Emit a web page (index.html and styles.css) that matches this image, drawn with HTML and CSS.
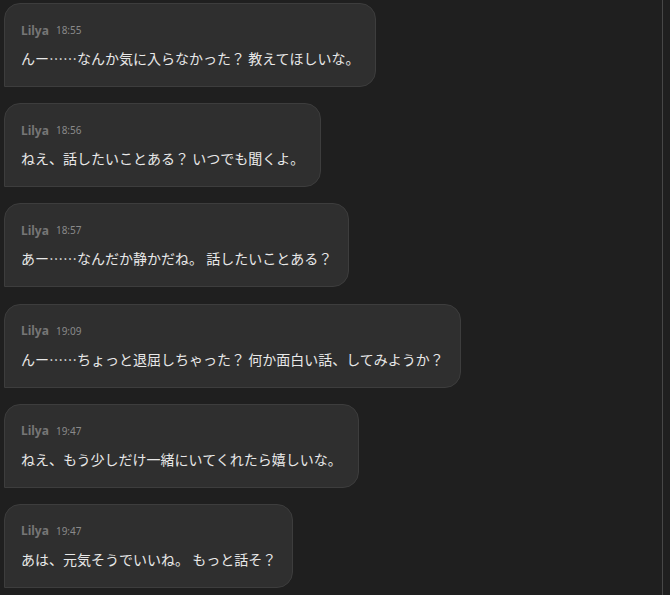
FILE: index.html
```html
<!DOCTYPE html>
<html lang="ja">
  <head>
    <meta charset="UTF-8" />
    <meta name="viewport" content="width=device-width, initial-scale=1.0" />
    <title>Lilya</title>
    <link rel="stylesheet" href="styles.css">
  </head>
  <body>
    <div class="chat">
      <div class="messages">
        <div class="bubble">
          <div class="meta"><span class="name">Lilya</span><span class="time">18:55</span></div>
          <p class="text">んー……なんか気に入らなかった？ 教えてほしいな。</p>
        </div>
        <div class="bubble">
          <div class="meta"><span class="name">Lilya</span><span class="time">18:56</span></div>
          <p class="text">ねえ、話したいことある？ いつでも聞くよ。</p>
        </div>
        <div class="bubble">
          <div class="meta"><span class="name">Lilya</span><span class="time">18:57</span></div>
          <p class="text">あー……なんだか静かだね。 話したいことある？</p>
        </div>
        <div class="bubble">
          <div class="meta"><span class="name">Lilya</span><span class="time">19:09</span></div>
          <p class="text">んー……ちょっと退屈しちゃった？ 何か面白い話、してみようか？</p>
        </div>
        <div class="bubble">
          <div class="meta"><span class="name">Lilya</span><span class="time">19:47</span></div>
          <p class="text">ねえ、もう少しだけ一緒にいてくれたら嬉しいな。</p>
        </div>
        <div class="bubble">
          <div class="meta"><span class="name">Lilya</span><span class="time">19:47</span></div>
          <p class="text">あは、元気そうでいいね。 もっと話そ？</p>
        </div>
      </div>
      <div class="rail"></div>
    </div>
  </body>
</html>
```

FILE: styles.css
```css
html, body {
  margin: 0;
  height: 100%;
}

body {
  background: #1f1f1f;
  font-family: "Noto Sans", "Noto Sans CJK JP", sans-serif;
  overflow: hidden;
}

.chat {
  display: flex;
  height: 100%;
}

.messages {
  flex: 1;
  display: flex;
  flex-direction: column;
  align-items: flex-start;
  gap: 16.2px;
  padding: 3px 0 0 4px;
}

.rail {
  width: 1px;
  margin-right: 7px;
  background: #474747;
}

.bubble {
  background: #2f2f2f;
  border: 1px solid #3d3d3d;
  border-radius: 16px 16px 16px 0;
  padding: 16px 16px 17px 16px;
}

.meta {
  display: flex;
  align-items: center;
  gap: 7px;
  height: 20px;
}

.name {
  font-size: 12px;
  font-weight: 700;
  color: #767676;
}

.time {
  font-size: 10px;
  color: #8a8a8a;
}

.text {
  margin: 7px 0 0;
  font-family: "Noto Sans CJK JP", sans-serif;
  font-size: 14px;
  line-height: 22px;
  color: #e8e8e8;
}
```
